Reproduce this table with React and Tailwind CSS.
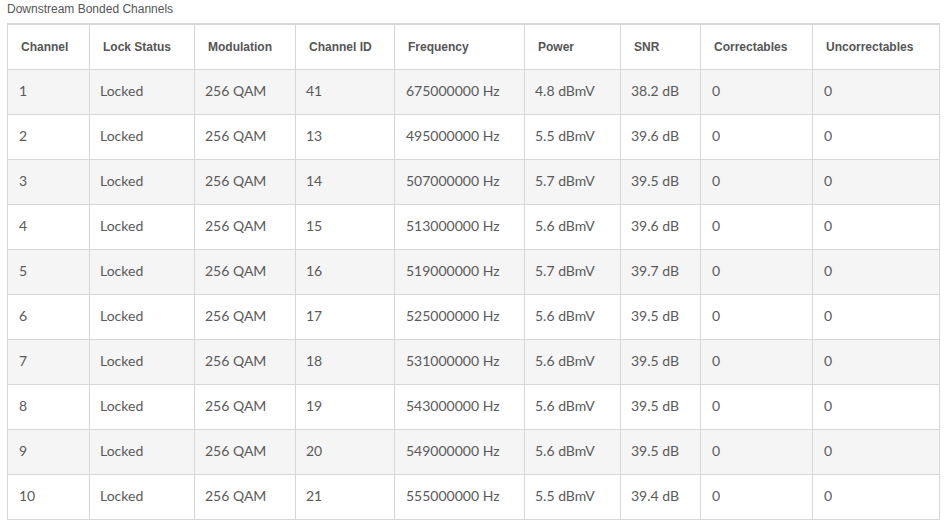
import React from 'react';

const columns = [
    { label: 'Channel', width: 82 },
    { label: 'Lock Status', width: 105 },
    { label: 'Modulation', width: 101 },
    { label: 'Channel ID', width: 99 },
    { label: 'Frequency', width: 130 },
    { label: 'Power', width: 96 },
    { label: 'SNR', width: 80 },
    { label: 'Correctables', width: 112 },
    { label: 'Uncorrectables', width: 127 },
];

const rows = [
    [1, 41, '675000000', '4.8', '38.2'],
    [2, 13, '495000000', '5.5', '39.6'],
    [3, 14, '507000000', '5.7', '39.5'],
    [4, 15, '513000000', '5.6', '39.6'],
    [5, 16, '519000000', '5.7', '39.7'],
    [6, 17, '525000000', '5.6', '39.5'],
    [7, 18, '531000000', '5.6', '39.5'],
    [8, 19, '543000000', '5.6', '39.5'],
    [9, 20, '549000000', '5.6', '39.5'],
    [10, 21, '555000000', '5.5', '39.4'],
];

const App = () => {
    return (
        <div className="bg-white w-[951px] h-[521px] overflow-hidden pl-[7px] text-[#555]">
            <div className="h-[23px] pt-[1px] text-[12px] leading-[16px] font-['Liberation_Sans',Arial,sans-serif]">
                Downstream Bonded Channels
            </div>
            <table className="table-fixed border-collapse w-[933px] border-t-2 border-t-[#d6d6d6]">
                <colgroup>
                    {columns.map(col => (
                        <col key={col.label} style={{ width: col.width }} />
                    ))}
                </colgroup>
                <thead>
                    <tr className="h-[45px]">
                        {columns.map(col => (
                            <th
                                key={col.label}
                                className="border border-[#d6d6d6] border-t-0 pl-[13px] text-left align-middle text-[12px] font-bold font-['Liberation_Sans',Arial,sans-serif] text-[#555]"
                            >
                                {col.label}
                            </th>
                        ))}
                    </tr>
                </thead>
                <tbody className="font-['Lato','Noto_Sans',sans-serif] text-[14px] text-[#5a5a5a]">
                    {rows.map(([ch, id, freq, power, snr], i) => (
                        <tr key={ch} className={`h-[45px] ${i % 2 === 0 ? 'bg-[#f5f5f5]' : 'bg-white'}`}>
                            <td className="border border-[#d6d6d6] pl-[11px] pb-[2px]">{ch}</td>
                            <td className="border border-[#d6d6d6] pl-[10px] pb-[2px]">Locked</td>
                            <td className="border border-[#d6d6d6] pl-[10px] pb-[2px]">256 QAM</td>
                            <td className="border border-[#d6d6d6] pl-[10px] pb-[2px]">{id}</td>
                            <td className="border border-[#d6d6d6] pl-[11px] pb-[2px]">{freq} Hz</td>
                            <td className="border border-[#d6d6d6] pl-[10px] pb-[2px]">{power} dBmV</td>
                            <td className="border border-[#d6d6d6] pl-[10px] pb-[2px]">{snr} dB</td>
                            <td className="border border-[#d6d6d6] pl-[11px] pb-[2px]">0</td>
                            <td className="border border-[#d6d6d6] pl-[11px] pb-[2px]">0</td>
                        </tr>
                    ))}
                </tbody>
            </table>
        </div>
    );
};

export default App;
